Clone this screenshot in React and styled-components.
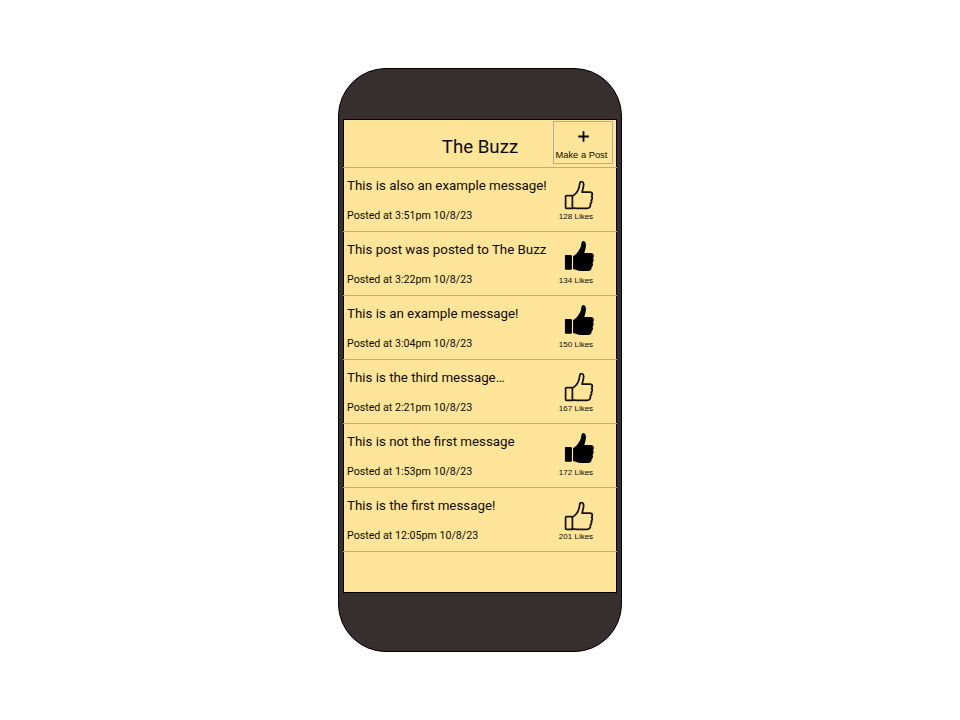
import React from "react";
import styled, { createGlobalStyle } from "styled-components";

const GlobalStyle = createGlobalStyle`
  * { box-sizing: border-box; }
  body { margin: 0; background: #fff; }
`;

const Page = styled.main`
  height: 720px;
  display: flex;
  align-items: center;
  justify-content: center;
  color: #0d0a05;
  font-family: Roboto, sans-serif;
`;

const Phone = styled.div`
  width: 284px;
  height: 584px;
  padding: 50px 4px 58px;
  background: #372e2f;
  border: 1px solid #000;
  border-radius: 48px;
`;

const Screen = styled.div`
  height: 474px;
  background: #ffe599;
  border: 1px solid #000;
`;

const Header = styled.header`
  display: grid;
  grid-template-columns: 1fr auto 1fr;
  height: 48px;
  margin: 0 -1px;
  padding: 1px 4px 0 4px;
  border-bottom: 1px solid #b0aba3;
`;

const Title = styled.h1`
  grid-column: 2;
  margin: 14px 0 0;
  font-size: 18.67px;
  line-height: 24px;
  font-weight: 400;
`;

const PostButton = styled.button`
  justify-self: end;
  display: flex;
  flex-direction: column;
  align-items: flex-start;
  width: 60px;
  height: 43px;
  padding: 9px 0 0 1.5px;
  white-space: nowrap;
  border: 1px solid #b0aba3;
  background: transparent;
  color: inherit;
  font: 9.33px/12px "Liberation Sans", sans-serif;
`;

const PlusIcon = styled.svg`
  flex: none;
  width: 11px;
  height: 11px;
  margin: 0 0 7px 22px;
`;

const Post = styled.article`
  display: flex;
  height: 64px;
  margin: 0 -1px;
  padding-left: 4px;
  border-bottom: 1px solid #b0aba3;
`;

const PostText = styled.div`
  width: 206px;
  white-space: nowrap;
`;

const Message = styled.p`
  margin: 9px 0 0;
  font-size: 13.33px;
  line-height: 18px;
`;

const Posted = styled.p`
  margin: 13px 0 0;
  font-size: 10.67px;
  line-height: 16px;
`;

const Likes = styled.div`
  display: flex;
  flex-direction: column;
  align-items: center;
  width: 46px;
  font: 8px/10px "Liberation Sans", sans-serif;
`;

const LikeIcon = styled.svg`
  width: 32px;
  height: 32px;
  margin: ${({ $top }) => $top}px 0 ${({ $top }) => 12 - $top}px 7px;
`;

function Thumb({ liked, top }) {
  return (
    <LikeIcon $top={top} viewBox="0.6 0.6 32 32" aria-hidden="true">
      {liked ? (
        <>
          <path d="M2.3 14.6h5.2q1 0 1 1v12.8q0 1-1 1H2.3q-.8 0-.8-1V15.6q0-1 .8-1Z" />
          <path d="M9.7 15.7c2.7-1.4 4.5-3.8 6-6.2 1.2-2 1.9-3.1 2.1-5.3.1-1.5.4-2.9 1.5-3.4 1.5-.6 3.2 1.3 3.3 3.4.1 2.6-.9 5.1-1.6 8.4H27c2.2.1 3.5 1.2 3.5 2.9 0 1-.4 1.7-1 2.2.7.7.9 1.7.8 2.5-.1 1-.6 1.7-1.2 2.2.5.7.6 1.6.4 2.5-.2 1-.7 1.6-1.3 2 .2 2.2-1 3.8-3.6 3.8h-6.8c-3.4 0-5.4-1.6-8.1-2.1Z" />
        </>
      ) : (
        <g fill="none" stroke="#171006" strokeWidth="1.75" strokeLinecap="round" strokeLinejoin="round">
          <path d="M3 15.2h5.4q.6 0 .6.6V28H3q-.8 0-.8-.8V16q0-.8.8-.8Z" />
          <path d="M9 15.6c3.5-1.5 5.6-4.8 6.6-8.4l.8-4.3c.3-1.7 1.3-2.2 2.3-1.7 1.4.7 1.8 2.5 1.4 4.5l-1.4 6.1h7.6c1.5 0 2.6.8 2.6 2 0 1.1-.3 1.6-.7 2.2.7.8.7 2 .4 2.7-.2.6-.5.9-.8 1.2.5.8.4 1.7.1 2.4-.2.6-.6.9-.9 1.1.3 2.4-.6 4.6-3.2 4.6h-7.5c-2.2 0-4.4-.2-7.3-.4" />
        </g>
      )}
    </LikeIcon>
  );
}

const posts = [
  { message: "This is also an example message!", time: "3:51pm 10/8/23", likes: 128, iconTop: 13 },
  { message: "This post was posted to The Buzz", time: "3:22pm 10/8/23", likes: 134, liked: true, iconTop: 9 },
  { message: "This is an example message!", time: "3:04pm 10/8/23", likes: 150, liked: true, iconTop: 9 },
  { message: "This is the third message…", time: "2:21pm 10/8/23", likes: 167, iconTop: 13 },
  { message: "This is not the first message", time: "1:53pm 10/8/23", likes: 172, liked: true, iconTop: 9 },
  { message: "This is the first message!", time: "12:05pm 10/8/23", likes: 201, iconTop: 14 },
];

export default function App() {
  return (
    <Page>
      <GlobalStyle />
      <Phone>
        <Screen>
          <Header>
            <Title>The Buzz</Title>
            <PostButton>
              <PlusIcon viewBox="0 0 11 11" aria-hidden="true">
                <path d="M5.5 .2v10.6M.2 5.5h10.6" stroke="#000" strokeWidth="1.8" />
              </PlusIcon>
              Make a Post
            </PostButton>
          </Header>
          {posts.map((post) => (
            <Post key={post.likes}>
              <PostText>
                <Message>{post.message}</Message>
                <Posted>Posted at {post.time}</Posted>
              </PostText>
              <Likes>
                <Thumb liked={post.liked} top={post.iconTop} />
                {post.likes} Likes
              </Likes>
            </Post>
          ))}
        </Screen>
      </Phone>
    </Page>
  );
}
